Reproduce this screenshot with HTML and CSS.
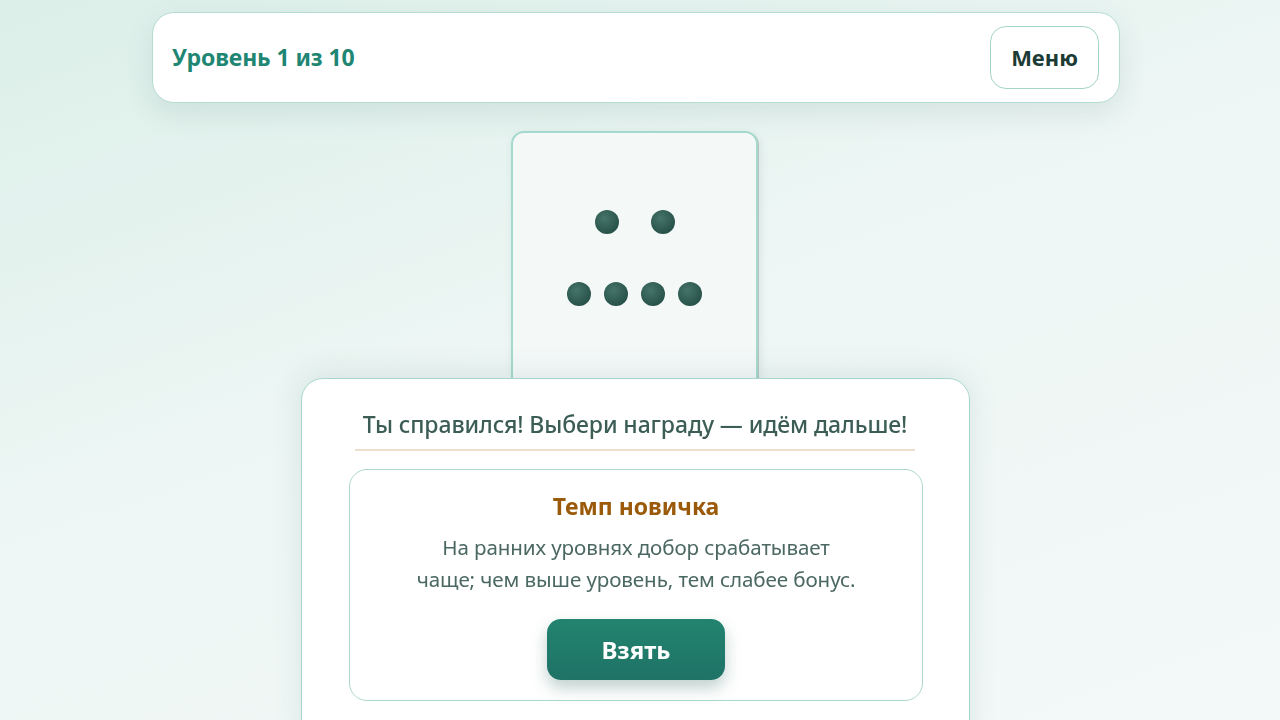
FILE: index.html
```html
<!DOCTYPE html>
<html lang="ru">
<head>
<meta charset="utf-8">
<title>Уровень 1 из 10</title>
<link rel="stylesheet" href="styles.css">
</head>
<body>
<div class="page">
  <header class="topbar">
    <div class="level">Уровень 1 из 10</div>
    <button class="menu-btn" type="button">Меню</button>
  </header>

  <main class="table">
    <div class="domino">
      <div class="pips pips-top">
        <span class="pip"></span><span class="pip"></span>
      </div>
      <div class="pips pips-bottom">
        <span class="pip"></span><span class="pip"></span><span class="pip"></span><span class="pip"></span>
      </div>
    </div>
  </main>
</div>

<section class="reward-dialog">
  <h2 class="reward-title">Ты справился! Выбери награду — идём дальше!</h2>
  <div class="reward-card">
    <h3 class="reward-name">Темп новичка</h3>
    <p class="reward-desc">На ранних уровнях добор срабатывает<br>чаще; чем выше уровень, тем слабее бонус.</p>
    <button class="take-btn" type="button">Взять</button>
  </div>
</section>
</body>
</html>
```

FILE: styles.css
```css
* { box-sizing: border-box; }

html, body {
  margin: 0;
  height: 100%;
  overflow: hidden;
}

body {
  font-family: "Noto Sans", "Open Sans", sans-serif;
  background: linear-gradient(160deg, #dcefe9 0%, #edf6f4 45%, #f3f9f8 100%);
  color: #2f4f48;
}

.page {
  width: 968px;
  margin: 0 auto;
  padding-top: 12px;
  position: relative;
  left: -4px;
}

.topbar {
  height: 91px;
  background: #ffffff;
  border: 1px solid #b3dcd2;
  border-radius: 22px;
  box-shadow: 0 10px 28px rgba(60, 110, 100, 0.12);
  display: flex;
  align-items: center;
  justify-content: space-between;
  padding: 0 20px 1px 19px;
}

.level {
  font-size: 23px;
  font-weight: 700;
  color: #1e8672;
  letter-spacing: -0.1px;
}

.menu-btn {
  width: 109px;
  height: 63px;
  border: 1.5px solid #a4d4c8;
  border-radius: 16px;
  background: #ffffff;
  font-family: inherit;
  font-size: 22px;
  font-weight: 700;
  color: #1d3b35;
  cursor: pointer;
}

.table {
  display: flex;
  justify-content: center;
  padding-top: 28px;
  padding-right: 3px;
}

.domino {
  width: 247px;
  height: 320px;
  background: #f4f9f8;
  border: 2px solid #a6d9cd;
  border-radius: 13px;
  box-shadow: 1px 1px 0 #b9c4c1, 2px 3px 8px rgba(60, 100, 90, 0.12);
  display: flex;
  flex-direction: column;
  align-items: center;
  padding-top: 77px;
  gap: 48px;
}

.pips {
  display: flex;
}

.pips-top { gap: 32px; }
.pips-bottom { gap: 13px; }

.pip {
  width: 24px;
  height: 24px;
  border-radius: 50%;
  background: radial-gradient(circle at 40% 35%, #46736a 0%, #2e5a51 55%, #1f463e 100%);
}

.reward-dialog {
  position: fixed;
  top: 378px;
  left: 301px;
  width: 669px;
  height: 380px;
  background: #ffffff;
  border: 1px solid #a9d6cc;
  border-radius: 22px;
  box-shadow: 0 -4px 30px rgba(60, 110, 100, 0.12);
  padding: 30px 54px 0 53px;
}

.reward-title {
  margin: 0;
  padding: 0 0 9px;
  border-bottom: 2px solid #eedfcd;
  text-align: center;
  font-size: 23px;
  line-height: 31px;
  font-weight: 500;
  color: #3c5d56;
  letter-spacing: -0.1px;
}

.reward-card {
  margin: 18px -8px 0 -6px;
  height: 232px;
  border: 1px solid #acd8ce;
  border-radius: 18px;
  display: flex;
  flex-direction: column;
  align-items: center;
  padding-top: 21px;
}

.reward-name {
  margin: 0;
  font-size: 23px;
  line-height: 31px;
  font-weight: 700;
  color: #9a5a09;
}

.reward-desc {
  margin: 9px 0 0;
  text-align: center;
  font-size: 20.6px;
  line-height: 32px;
  color: #4b6862;
  letter-spacing: -0.1px;
}

.take-btn {
  margin-top: 24px;
  width: 178px;
  height: 61px;
  border: none;
  border-radius: 14px;
  background: linear-gradient(180deg, #22846f 0%, #1f7266 100%);
  box-shadow: 0 8px 16px rgba(30, 90, 80, 0.28);
  font-family: inherit;
  font-size: 24px;
  font-weight: 700;
  color: #ffffff;
  cursor: pointer;
}
```
